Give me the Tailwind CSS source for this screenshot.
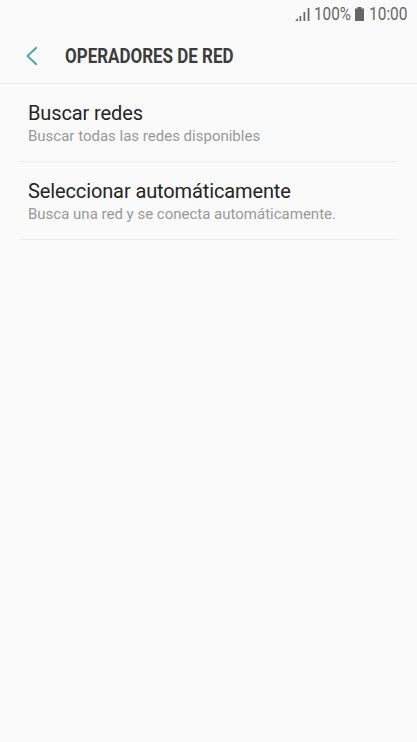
<!DOCTYPE html>
<html lang="es">
<head>
    <meta charset="UTF-8">
    <meta name="viewport" content="width=device-width, initial-scale=1.0">
    <title>Operadores de red</title>
    <script src="https://cdn.jsdelivr.net/npm/@tailwindcss/browser@4"></script>
</head>
<body class="bg-[#fafafa] min-h-screen font-['Roboto',sans-serif] overflow-hidden">
    <!-- Status bar -->
    <div class="h-[28px] flex items-center justify-end pr-[9px] text-[#666]">
        <svg class="w-[15px] h-[14px] mr-1" viewBox="0 0 15 14" fill="currentColor">
            <path d="M0 14l3-3v3zM4.500 9h1.700v5H4.500zM8.500 5h1.700v9H8.500zM12.700 1h1.700v13h-1.700z"/>
        </svg>
        <svg class="w-[37px] h-[22px] mr-[4px] overflow-visible" fill="currentColor"><text x="0" y="17" font-size="18" textLength="37" lengthAdjust="spacingAndGlyphs">100%</text></svg>
        <svg class="w-[9px] h-[14px] mr-[5px]" viewBox="0 0 9 14" fill="currentColor">
            <path d="M2.500 0h4v1.500H9V14H0V1.500h2.500z"/>
        </svg>
        <svg class="w-[39px] h-[22px] overflow-visible" fill="currentColor"><text x="0" y="17" font-size="18" textLength="38.500" lengthAdjust="spacingAndGlyphs">10:00</text></svg>
    </div>

    <header class="h-[56px] flex items-center border-b border-[#efefef] pl-[26px]">
        <svg class="w-[12px] h-[20px]" viewBox="0 0 12 20" fill="none" stroke="#4a9fc4" stroke-width="1.900">
            <path d="M10.800 1.200L1.500 10l9.300 8.800"/>
        </svg>
        <h1 class="ml-[27px]">
            <svg class="w-[169px] h-[26px] overflow-visible" fill="#3c3c3c"><text x="0" y="20" font-size="19.500" font-weight="700" textLength="168.500" lengthAdjust="spacingAndGlyphs">OPERADORES DE RED</text></svg>
        </h1>
    </header>

    <main class="px-5">
        <div class="h-[78px] pl-2 pt-4 border-b border-[#ededed]">
            <h2 class="text-[20px] leading-[27px] tracking-[-0.120px] text-[#252525]">Buscar redes</h2>
            <p class="text-[15px] leading-[18px] text-[#999]">Buscar todas las redes disponibles</p>
        </div>
        <div class="h-[78px] pl-2 pt-4 border-b border-[#ededed]">
            <h2 class="text-[20px] leading-[27px] tracking-[-0.120px] text-[#252525]">Seleccionar automáticamente</h2>
            <p class="text-[15px] leading-[18px] text-[#999]">Busca una red y se conecta automáticamente.</p>
        </div>
    </main>
</body>
</html>
